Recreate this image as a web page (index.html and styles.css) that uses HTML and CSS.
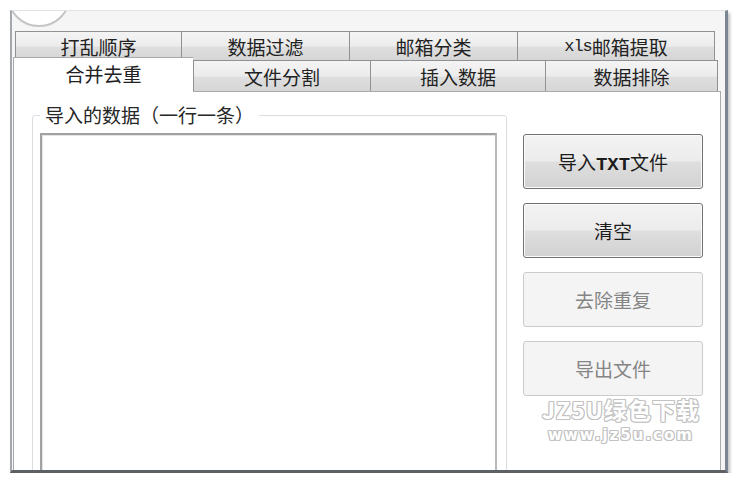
FILE: index.html
```html
<!DOCTYPE html>
<html lang="zh-CN">
  <head>
    <meta charset="UTF-8" />
    <meta name="viewport" content="width=device-width, initial-scale=1.0" />
    <title>合并去重</title>
    <link rel="stylesheet" href="styles.css">
  </head>
  <body>
    <div class="window">
      <div class="orb"></div>

      <div class="tab-row back">
        <div class="tab t-shuffle">打乱顺序</div>
        <div class="tab t-filter">数据过滤</div>
        <div class="tab t-mailsort">邮箱分类</div>
        <div class="tab t-xls"><span class="mono thin">xls</span>邮箱提取</div>
      </div>
      <div class="tab-row front">
        <div class="tab active">合并去重</div>
        <div class="tab t-split">文件分割</div>
        <div class="tab t-insert">插入数据</div>
        <div class="tab t-exclude">数据排除</div>
      </div>

      <div class="panel">
        <fieldset class="group">
          <legend>导入的数据（一行一条）</legend>
          <textarea class="input-list"></textarea>
        </fieldset>

        <div class="actions">
          <button class="btn">导入<span class="mono">TXT</span>文件</button>
          <button class="btn">清空</button>
          <button class="btn" disabled>去除重复</button>
          <button class="btn" disabled>导出文件</button>
        </div>

        <div class="watermark">
          <div class="wm-big">JZ5U绿色下载</div>
          <div class="wm-small">www.jz5u.com</div>
        </div>
      </div>
    </div>
  </body>
</html>
```

FILE: styles.css
```css
body {
  margin: 0;
  background: #ffffff;
  font-family: "Noto Sans CJK SC", "Noto Sans", sans-serif;
  color: #222222;
}

.mono {
  font-family: "Liberation Mono", "DejaVu Sans Mono", monospace;
  font-weight: bold;
}
.mono.thin {
  font-weight: normal;
  font-size: 17px;
  letter-spacing: -1px;
}

.window {
  position: relative;
  box-sizing: border-box;
  width: 718px;
  height: 463px;
  margin: 10px 0 0 10px;
  padding-top: 20px;
  background: #f5f5f5;
  border-top: 1px solid #e2e2e2;
  border-left: 2px solid #a3a8ae;
  border-right: 3px solid #7c8692;
  border-bottom: 3px solid #5d6064;
  box-shadow: 2px 3px 3px rgba(0, 0, 0, 0.25);
  overflow: hidden;
}

/* window orb peeking in at the top left */
.orb {
  position: absolute;
  left: -5px;
  top: -48px;
  width: 60px;
  height: 60px;
  border-radius: 50%;
  border: 2px solid #c4c4c4;
  background: #ffffff;
}

/* tabs */
.tab-row {
  display: flex;
  font-size: 19px;
}
.tab-row.back {
  padding-left: 3px;
  height: 29px;
}
.tab-row.front {
  padding-left: 1px;
  height: 31px;
  position: relative;
  z-index: 2;
}

.tab {
  box-sizing: border-box;
  display: flex;
  align-items: center;
  justify-content: center;
  border: 1px solid #8f9194;
  border-bottom: none;
  margin-left: -1px;
  background: linear-gradient(#f4f4f4, #ececec 50%, #dedede 55%, #d6d6d6);
  line-height: 1;
}
.tab:first-child {
  margin-left: 0;
}

.t-shuffle { width: 167px; }
.t-filter { width: 169px; }
.t-mailsort { width: 169px; }
.t-xls { width: 198px; }

.t-split { width: 178px; margin-left: 0; }
.t-insert { width: 176px; }
.t-exclude { width: 173px; }

.tab.active {
  width: 180px;
  height: 35px;
  margin-top: -3px;
  padding-bottom: 4px;
  background: #ffffff;
  border-color: #a9a9a9;
  border-right: none;
}

/* tab page */
.panel {
  position: relative;
  z-index: 1;
  box-sizing: border-box;
  display: flex;
  align-items: flex-start;
  width: 708px;
  height: 420px;
  margin-left: 1px;
  background: #ffffff;
  border: 1px solid #a9a9a9;
  border-bottom: none;
}

.group {
  box-sizing: border-box;
  width: 475px;
  min-width: 0;
  margin: 11px 0 0 18px;
  padding: 0 9px 0 7px;
  border: 1px solid #d8dde2;
  border-radius: 3px;
}
.group legend {
  padding: 0 5px;
  font-size: 19px;
  line-height: 24px;
  color: #262626;
}

.input-list {
  display: block;
  box-sizing: border-box;
  width: 457px;
  height: 360px;
  margin-top: 6px;
  resize: none;
  background: #ffffff;
  border: 2px solid #b9b9b9;
  border-top-color: #a2a2a2;
  border-left-color: #a2a2a2;
  box-shadow: inset 1px 1px 0 #e4e4e4;
}

.actions {
  display: flex;
  flex-direction: column;
  gap: 14px;
  margin: 42px 0 0 16px;
}

.btn {
  box-sizing: border-box;
  width: 180px;
  height: 55px;
  padding: 0;
  font-family: inherit;
  font-size: 19px;
  color: #1c1c1c;
  border: 1px solid #6f7174;
  border-radius: 3px;
  background: linear-gradient(#f3f3f3, #ececec 48%, #dedede 52%, #d2d2d2);
  box-shadow: inset 0 0 0 1px #fbfbfb;
}
.btn:disabled {
  color: #858585;
  border-color: #cbcbcb;
  background: #f4f4f4;
  box-shadow: none;
}

/* site watermark over the screenshot */
.watermark {
  position: absolute;
  left: 522px;
  top: 305px;
  width: 170px;
  text-align: center;
  color: #ffffff;
  font-weight: bold;
  line-height: 1;
  text-shadow:
    1px 0 0 #c3c3c3, -1px 0 0 #c3c3c3,
    0 1px 0 #c3c3c3, 0 -1px 0 #c3c3c3,
    1px 1px 0 #c3c3c3, -1px -1px 0 #c3c3c3,
    1px -1px 0 #c3c3c3, -1px 1px 0 #c3c3c3;
}
.wm-big {
  font-size: 23px;
  line-height: 24px;
  letter-spacing: 1px;
}
.wm-small {
  margin-top: 7px;
  font-family: "DejaVu Sans", sans-serif;
  font-size: 15px;
  line-height: 15px;
  letter-spacing: 2px;
}
```
